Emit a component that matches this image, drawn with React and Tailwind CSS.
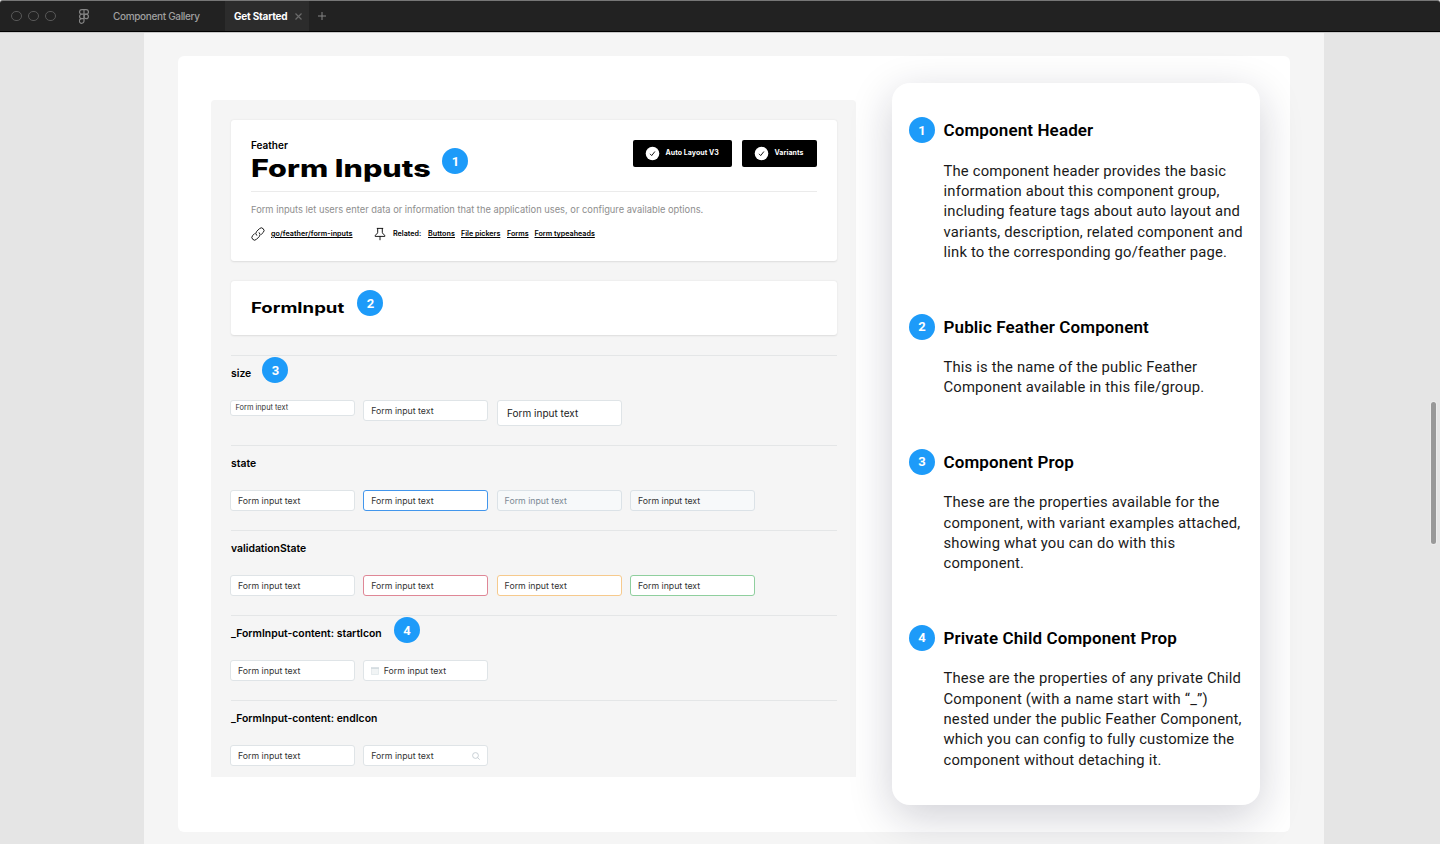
import React from "react";

function Badge({ n, className = "" }) {
  return (
    <span className={`flex size-[26px] shrink-0 items-center justify-center rounded-full bg-[#1d9bf9] font-['Roboto',sans-serif] text-[13px] leading-none font-bold text-white ${className}`}>
      {n}
    </span>
  );
}

function TitleBar() {
  return (
    <header className="relative z-10 flex h-8 shrink-0 items-stretch rounded-t-[3px] border-t border-b border-t-[#777] border-b-black bg-[#222] shadow-[0_1px_0_#c8c8c8]">
      <div className="ml-[11px] flex w-[68px] items-center gap-[6.5px]">
        <span className="size-[10.5px] rounded-full border border-[#585858]" />
        <span className="size-[10.5px] rounded-full border border-[#585858]" />
        <span className="size-[10.5px] rounded-full border border-[#585858]" />
      </div>
      <svg className="mt-[8px] h-[15px] w-[10px]" viewBox="0 0 10 15" fill="none" stroke="#858585" strokeWidth="1.2">
        <path d="M5 .7H2.8a2.2 2.2 0 0 0 0 4.5H5zM5 .7h2.2a2.2 2.2 0 0 1 0 4.5H5zM5 5.2H2.8a2.2 2.2 0 0 0 0 4.5H5zM5 9.7H2.8A2.3 2.3 0 1 0 5 12z" />
        <circle cx="7.2" cy="7.45" r="2.2" />
      </svg>
      <div className="ml-[24px] flex w-[112px] items-center font-['Inter',sans-serif] text-[10px] font-medium tracking-[-0.33px] text-[#a0a0a0]">
        Component Gallery
      </div>
      <div className="flex w-[84px] items-center bg-[#2c2c2c] pl-[9px] font-['Inter',sans-serif] text-[10px] font-bold tracking-[-0.2px] text-white">
        <span className="w-[61px] whitespace-nowrap">Get Started</span>
        <svg className="size-[7px]" viewBox="0 0 7 7" stroke="#6a6a6a" strokeWidth="1.2"><path d="M.5.5l6 6M6.5.5l-6 6" /></svg>
      </div>
      <svg className="mt-[11px] ml-[9px] size-[8px]" viewBox="0 0 8 8" stroke="#858585" strokeWidth="1"><path d="M4 0v8M0 4h8" /></svg>
    </header>
  );
}

function Tag({ children, className }) {
  return (
    <div className={`flex h-[27px] items-center rounded-[2px] bg-black pl-[12px] ${className}`}>
      <svg className="mr-[5.5px] size-[15px]" viewBox="0 0 15 15" fill="none">
        <circle cx="7.5" cy="7.5" r="6.8" fill="white" />
        <path d="M5 7.8l1.7 1.8 3.2-4.1" stroke="black" strokeWidth="0.9" />
      </svg>
      <span className="pt-px font-['Inter',sans-serif] text-[7px] font-bold tracking-[0.05px] whitespace-nowrap text-white">{children}</span>
    </div>
  );
}

function HeaderCard() {
  return (
    <div className="relative h-[141px] rounded-[3px] bg-white px-5 pt-[19.5px] shadow-[0_0.5px_2px_rgba(0,0,0,0.1)]">
      <div className="flex h-[51.5px] justify-between">
        <div className="-mt-[0.5px] font-['Inter',sans-serif] text-black">
          <div className="h-[14px] text-[10px] leading-[12px] font-semibold">Feather</div>
          <h1 className="origin-left scale-x-[1.27] text-[24px] leading-[31px] font-extrabold whitespace-nowrap">Form Inputs</h1>
        </div>
        <div className="flex gap-[10px]">
          <Tag className="w-[99px]">Auto Layout V3</Tag>
          <Tag className="w-[75px]">Variants</Tag>
        </div>
      </div>
      <Badge n="1" className="absolute top-[28.4px] left-[211.4px]" />
      <div className="border-t border-[#ebebeb]" />
      <p className="mt-[12px] font-['Inter',sans-serif] text-[9.32px] leading-[12px] whitespace-nowrap text-[#8e8e8e]">
        Form inputs let users enter data or information that the application uses, or configure available options.
      </p>
      <div className="mt-[11px] flex items-center font-['Inter',sans-serif] text-[7.15px] leading-[14px] font-semibold whitespace-nowrap text-black">
        <svg className="mr-[6px] size-[14px]" viewBox="0 0 14 14" fill="none" stroke="black" strokeWidth="0.9" strokeLinecap="round">
          <path d="M5.6 8.3a2.7 2.7 0 0 1 0-3.8L8.4 1.7a2.7 2.7 0 0 1 3.8 0 2.7 2.7 0 0 1 0 3.8L10.4 7.3" />
          <path d="M8.3 5.7a2.7 2.7 0 0 1 0 3.8L5.5 12.3a2.7 2.7 0 0 1-3.8 0 2.7 2.7 0 0 1 0-3.8L3.5 6.7" />
        </svg>
        <span className="w-[103px] tracking-[0.07px]"><u>go/feather/form-inputs</u></span>
        <svg className="mr-[7px] h-[14px] w-[12px]" viewBox="0 0 12 14" fill="none" stroke="black" strokeWidth="0.9">
          <path d="M2.8 1.4h6.4M3.7 1.4v3.9q0 1-.8 1.6L1.2 8.3v1.1h9.6V8.3L9.1 6.9q-.8-.6-.8-1.6V1.4M6 9.4v3.8" />
        </svg>
        <span className="w-[35px]">Related:</span>
        <span className="w-[33px] tracking-[0.07px]"><u>Buttons</u></span>
        <span className="w-[46px]"><u>File pickers</u></span>
        <span className="w-[27.5px]"><u>Forms</u></span>
        <u>Form typeaheads</u>
      </div>
    </div>
  );
}

const sizes = {
  sm: "h-[16px] px-[4.5px] text-[7.4px]",
  md: "h-[21px] px-[7px] pt-px text-[8.75px]",
  lg: "h-[26px] px-[9.5px] text-[10px]",
};

function Input({ size = "md", tone = "border-[#dfe4e7] bg-white text-[#333]", start, end }) {
  return (
    <div className={`flex w-[125px] items-center rounded-[3px] border font-['Inter',sans-serif] leading-none whitespace-nowrap ${sizes[size]} ${tone}`}>
      {start && (
        <svg className="mr-[4.5px] size-[8px]" viewBox="0 0 8 8">
          <rect x="0.4" y="0.4" width="7.2" height="7.2" fill="#f1f4f5" stroke="#dfe5e8" strokeWidth="0.7" />
          <path d="M0 1.2h8" stroke="#d5dde1" strokeWidth="1.6" />
        </svg>
      )}
      <span className="flex-1">Form input text</span>
      {end && (
        <svg className="size-[8px]" viewBox="0 0 8 8" fill="none" stroke="#bcc5cb" strokeWidth="0.8">
          <circle cx="3.5" cy="3.5" r="2.9" />
          <path d="M5.6 5.6L7.7 7.7" />
        </svg>
      )}
    </div>
  );
}

function Section({ title, className = "h-[85px]", badge, children }) {
  return (
    <section className={`relative border-t border-[#e4e6e7] ${className}`}>
      <h3 className="h-[44px] pt-[10px] font-['Inter',sans-serif] text-[10.4px] leading-[16px] font-semibold text-black">{title}</h3>
      {badge}
      <div className="-ml-px flex items-start gap-[8.3px]">{children}</div>
    </section>
  );
}

function Specimen() {
  return (
    <div className="mt-[44px] ml-[33px] h-[677px] w-[645px] shrink-0 rounded-t-[4px] bg-[#f5f5f5] py-5 pr-[19px] pl-5">
      <HeaderCard />
      <div className="relative mt-5 flex h-[54px] items-center rounded-[3px] bg-white px-5 shadow-[0_0.5px_2px_rgba(0,0,0,0.1)]">
        <h2 className="origin-left scale-x-[1.28] font-['Inter',sans-serif] text-[14.5px] font-bold whitespace-nowrap text-black">FormInput</h2>
        <Badge n="2" className="absolute top-[9px] left-[126.4px]" />
      </div>
      <div className="mt-5">
        <Section title="size" className="h-[90px]" badge={<Badge n="3" className="absolute top-[1px] left-[31.4px]" />}>
          <Input size="sm" />
          <Input />
          <Input size="lg" tone="border-[#dfe4e7] bg-white text-[#222]" />
        </Section>
        <Section title="state">
          <Input />
          <Input tone="border-[#4296ec] bg-white text-[#333]" />
          <Input tone="border-[#dbe2e7] bg-[#f7f9fa] text-[#7c8995]" />
          <Input tone="border-[#dbe2e7] bg-[#f7f9fa] text-[#333]" />
        </Section>
        <Section title="validationState">
          <Input />
          <Input tone="border-[#df8796] bg-white text-[#333]" />
          <Input tone="border-[#f6ca8d] bg-white text-[#333]" />
          <Input tone="border-[#8fcf9e] bg-white text-[#333]" />
        </Section>
        <Section title="_FormInput-content: startIcon" badge={<Badge n="4" className="absolute top-[1px] left-[163px]" />}>
          <Input />
          <Input start />
        </Section>
        <Section title="_FormInput-content: endIcon">
          <Input />
          <Input end />
        </Section>
      </div>
    </div>
  );
}

const notes = [
  ["Component Header", ["The component header provides the basic", "information about this component group,", "including feature tags about auto layout and", "variants, description, related component and", "link to the corresponding go/feather page."]],
  ["Public Feather Component", ["This is the name of the public Feather", "Component available in this file/group."]],
  ["Component Prop", ["These are the properties available for the", "component, with variant examples attached,", "showing what you can do with this", "component."]],
  ["Private Child Component Prop", ["These are the properties of any private Child", "Component (with a name start with “_”)", "nested under the public Feather Component,", "which you can config to fully customize the", "component without detaching it."]],
];

function Legend() {
  return (
    <aside className="mt-[27px] ml-[36px] flex h-[722px] w-[368.4px] shrink-0 flex-col gap-[51px] rounded-[18px] bg-white pt-[34.4px] pl-[17px] shadow-[0_12px_44px_rgba(20,20,50,0.2)]">
      {notes.map(([title, lines], i) => (
        <div key={title} className="font-['Roboto',sans-serif] text-black">
          <div className="flex items-center gap-[8.5px]">
            <Badge n={i + 1} />
            <h2 className="pt-px text-[17px] leading-[25px] font-semibold tracking-[0.12px] whitespace-nowrap">{title}</h2>
          </div>
          <p className="mt-[17.2px] ml-[34.5px] text-[14.8px] leading-[20.46px] tracking-[0.18px] whitespace-nowrap text-[#1a1a1a]">
            {lines.map((l) => (
              <span key={l} className="block">{l}</span>
            ))}
          </p>
        </div>
      ))}
    </aside>
  );
}

export default function App() {
  return (
    <div className="relative flex h-[844px] w-[1440px] flex-col overflow-hidden bg-[#e5e5e5]">
      <TitleBar />
      <main className="ml-[143.5px] h-[812px] w-[1180.5px] overflow-hidden bg-[#f5f5f5] pt-6 pl-[34.5px]">
        <div className="flex h-[776px] w-[1112px] items-start rounded-[6px] bg-white">
          <Specimen />
          <Legend />
        </div>
      </main>
      <div className="absolute top-[402px] right-[4px] h-[142px] w-[5px] rounded-full bg-[#999] shadow-[0_0_0_1px_#ececec]" />
    </div>
  );
}
